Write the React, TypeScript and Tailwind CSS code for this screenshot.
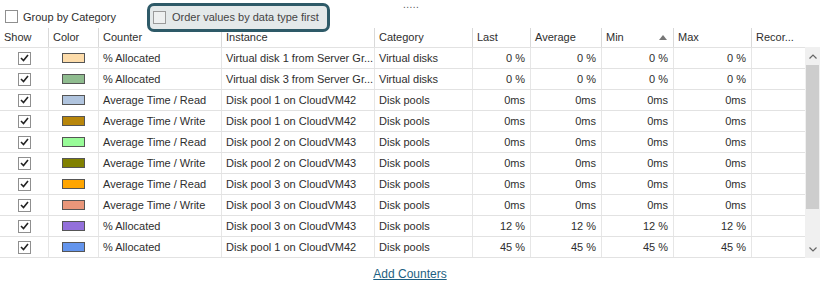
import React from "react";

const gridCols = "grid-cols-[49px_50px_123px_153px_98px_58px_71px_72px_78px_51px]";

type Row = {
  color: string;
  counter: string;
  instance: string;
  category: string;
  last: string;
  avg: string;
  min: string;
  max: string;
};

const rows: Row[] = [
  { color: "#fddcaa", counter: "% Allocated", instance: "Virtual disk 1 from Server Gr...", category: "Virtual disks", last: "0 %", avg: "0 %", min: "0 %", max: "0 %" },
  { color: "#8fbc8f", counter: "% Allocated", instance: "Virtual disk 3 from Server Gr...", category: "Virtual disks", last: "0 %", avg: "0 %", min: "0 %", max: "0 %" },
  { color: "#b0c4de", counter: "Average Time / Read", instance: "Disk pool 1 on CloudVM42", category: "Disk pools", last: "0ms", avg: "0ms", min: "0ms", max: "0ms" },
  { color: "#b8860b", counter: "Average Time / Write", instance: "Disk pool 1 on CloudVM42", category: "Disk pools", last: "0ms", avg: "0ms", min: "0ms", max: "0ms" },
  { color: "#98fb98", counter: "Average Time / Read", instance: "Disk pool 2 on CloudVM43", category: "Disk pools", last: "0ms", avg: "0ms", min: "0ms", max: "0ms" },
  { color: "#808000", counter: "Average Time / Write", instance: "Disk pool 2 on CloudVM43", category: "Disk pools", last: "0ms", avg: "0ms", min: "0ms", max: "0ms" },
  { color: "#ffa500", counter: "Average Time / Read", instance: "Disk pool 3 on CloudVM43", category: "Disk pools", last: "0ms", avg: "0ms", min: "0ms", max: "0ms" },
  { color: "#e9967a", counter: "Average Time / Write", instance: "Disk pool 3 on CloudVM43", category: "Disk pools", last: "0ms", avg: "0ms", min: "0ms", max: "0ms" },
  { color: "#9370db", counter: "% Allocated", instance: "Disk pool 3 on CloudVM43", category: "Disk pools", last: "12 %", avg: "12 %", min: "12 %", max: "12 %" },
  { color: "#6495ed", counter: "% Allocated", instance: "Disk pool 1 on CloudVM42", category: "Disk pools", last: "45 %", avg: "45 %", min: "45 %", max: "45 %" },
];

function Box({ checked }: { checked?: boolean }) {
  return (
    <span className="inline-flex w-[13px] h-[13px] border border-[#8f8f8f] bg-white items-center justify-center shrink-0">
      {checked && (
        <svg width="9" height="8" viewBox="0 0 9 8">
          <path d="M1 4 L3.5 6.5 L8 1" fill="none" stroke="#222" strokeWidth="1.6" />
        </svg>
      )}
    </span>
  );
}

const headers = ["Show", "Color", "Counter", "Instance", "Category", "Last", "Average", "Min", "Max", "Recor..."];

export default function App() {
  return (
    <div
      className="relative w-[820px] h-[288px] bg-white text-[#2e2e2e] text-[11px] overflow-hidden"
      style={{ fontFamily: '"Liberation Sans", Arial, sans-serif' }}
    >
      {/* drag handle */}
      <div className="absolute left-[403px] top-[0px] text-[#555] text-[10px] leading-none tracking-[0.5px]">.....</div>

      {/* top bar */}
      <div className="h-[28px] flex items-end pb-[3px] pl-[5px]">
        <label className="flex items-center gap-[5px]">
          <Box />
          <span>Group by Category</span>
        </label>
      </div>

      {/* highlight annotation */}
      <div className="absolute left-[147px] top-[3px] w-[183px] h-[29px] rounded-[7px] border-[3px] border-[#2e5a68] bg-[#e4e9ea] flex items-center pl-[3px] gap-[6px] text-[#444]">
        <span className="inline-flex w-[13px] h-[13px] border border-[#9a9a9a] bg-[#eef0f0]" />
        <span>Order values by data type first</span>
      </div>

      {/* table */}
      <div className="flex">
        <div className="w-[805px]">
          <div className={`grid ${gridCols} h-[19px]`}>
            {headers.map((h, i) => (
              <div
                key={h}
                className={`flex items-center pl-[4px] ${i < headers.length - 1 ? "border-r border-[#d9d9d9]" : ""} ${i === 7 ? "justify-between pr-[6px]" : ""}`}
              >
                <span>{h}</span>
                {i === 7 && (
                  <svg width="8" height="5" viewBox="0 0 8 5">
                    <path d="M0 5 L4 0 L8 5 Z" fill="#777" />
                  </svg>
                )}
              </div>
            ))}
          </div>
          <div className="border-t border-[#e2e2e2]">
            {rows.map((r, idx) => (
              <div key={idx} className={`grid ${gridCols} h-[21px] border-b border-[#e2e2e2]`}>
                <div className="flex items-center justify-center border-r border-[#e6e6e6]">
                  <Box checked />
                </div>
                <div className="flex items-center justify-center border-r border-[#e6e6e6]">
                  <span className="w-[23px] h-[10px] border border-[#555]" style={{ backgroundColor: r.color }} />
                </div>
                <div className="flex items-center pl-[4px] border-r border-[#e6e6e6] whitespace-nowrap overflow-hidden">{r.counter}</div>
                <div className="flex items-center pl-[4px] border-r border-[#e6e6e6] whitespace-nowrap overflow-hidden">{r.instance}</div>
                <div className="flex items-center pl-[4px] border-r border-[#e6e6e6] whitespace-nowrap">{r.category}</div>
                <div className="flex items-center justify-end pr-[5px] border-r border-[#e6e6e6]">{r.last}</div>
                <div className="flex items-center justify-end pr-[5px] border-r border-[#e6e6e6]">{r.avg}</div>
                <div className="flex items-center justify-end pr-[5px] border-r border-[#e6e6e6]">{r.min}</div>
                <div className="flex items-center justify-end pr-[5px] border-r border-[#e6e6e6]">{r.max}</div>
                <div />
              </div>
            ))}
          </div>
        </div>
        {/* scrollbar */}
        <div className="w-[15px] mt-[19px] h-[211px] bg-[#f0f0f0] flex flex-col items-center">
          <div className="h-[18px] flex items-center justify-center">
            <svg width="8" height="5" viewBox="0 0 8 5">
              <path d="M0.5 4.5 L4 1 L7.5 4.5" fill="none" stroke="#666" strokeWidth="1.2" />
            </svg>
          </div>
          <div className="w-[13px] h-[144px] bg-[#cdcdcd]" />
          <div className="flex-1" />
          <div className="h-[18px] flex items-center justify-center">
            <svg width="8" height="5" viewBox="0 0 8 5">
              <path d="M0.5 0.5 L4 4 L7.5 0.5" fill="none" stroke="#666" strokeWidth="1.2" />
            </svg>
          </div>
        </div>
      </div>

      <div className="flex justify-center mt-[7px]">
        <a className="underline text-[#1d5f82] text-[12px] cursor-pointer">Add Counters</a>
      </div>
    </div>
  );
}
